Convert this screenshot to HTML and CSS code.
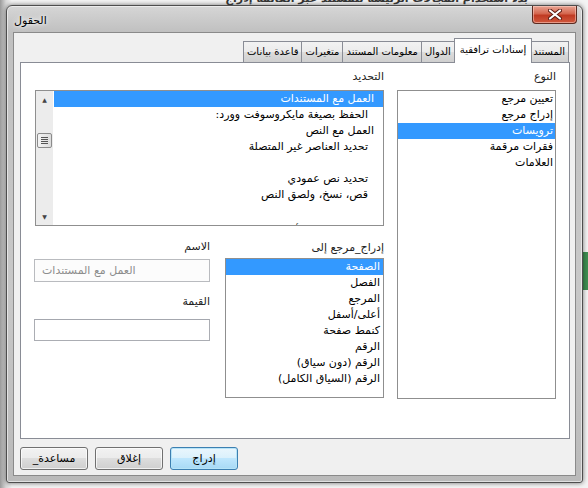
FILE: index.html
```html
<!DOCTYPE html>
<html lang="ar">
<head>
<meta charset="UTF-8">
<title>الحقول</title>
<link rel="stylesheet" href="styles.css">
</head>
<body>
<div class="desktop">
  <div class="behind-text"><span>بدء استخدام المجالات الرئيسة للمستند عبر القائمة إدراج</span></div>
  <div class="window">
    <div class="titlebar">
      <span class="title">الحقول</span>
      <div class="close-btn">
        <svg width="14" height="11" viewBox="0 0 14 11">
          <path d="M2 1.5 L12 9.5 M12 1.5 L2 9.5" stroke="#5a1a10" stroke-width="4" stroke-linecap="round"/>
          <path d="M2 1.5 L12 9.5 M12 1.5 L2 9.5" stroke="#fff" stroke-width="2.2" stroke-linecap="round"/>
        </svg>
      </div>
    </div>
    <div class="client" dir="rtl">
      <div class="tabs">
        <div class="tab">المستند</div>
        <div class="tab active">إسنادات ترافقية</div>
        <div class="tab">الدوال</div>
        <div class="tab">معلومات المستند</div>
        <div class="tab">متغيرات</div>
        <div class="tab">قاعدة بيانات</div>
      </div>
      <div class="panel">
        <div class="col-type">
          <div class="label">النوع</div>
          <ul class="list list-type">
            <li>تعيين مرجع</li>
            <li>إدراج مرجع</li>
            <li class="selected">ترويسات</li>
            <li>فقرات مرقمة</li>
            <li>العلامات</li>
          </ul>
        </div>
        <div class="col-main">
          <div class="label">التحديد</div>
          <div class="list list-select">
            <ul>
              <li class="selected">العمل مع المستندات</li>
              <li class="sub">الحفظ بصيغة مايكروسوفت وورد:</li>
              <li>العمل مع النص</li>
              <li class="sub">تحديد العناصر غير المتصلة</li>
              <li></li>
              <li class="sub">تحديد نص عمودي</li>
              <li class="sub">قص، نسخ، ولصق النص</li>
              <li></li>
              <li class="sub peek">تنسيق النص بالأنماط</li>
            </ul>
            <div class="scrollbar">
              <span class="arrow">&#9650;</span>
              <div class="track">
                <div class="thumb"><i></i><i></i><i></i><i></i></div>
              </div>
              <span class="arrow">&#9660;</span>
            </div>
          </div>
          <div class="lower">
            <div class="group-insert">
              <div class="label">إدراج_مرجع إلى</div>
              <ul class="list list-insert">
                <li class="selected">الصفحة</li>
                <li>الفصل</li>
                <li>المرجع</li>
                <li>أعلى/أسفل</li>
                <li>كنمط صفحة</li>
                <li>الرقم</li>
                <li>الرقم (دون سياق)</li>
                <li>الرقم (السياق الكامل)</li>
              </ul>
            </div>
            <div class="group-fields">
              <div class="label">الاسم</div>
              <div class="field disabled" dir="ltr">العمل مع المستندات</div>
              <div class="label label-value">القيمة</div>
              <div class="field field-value"></div>
            </div>
          </div>
        </div>
      </div>
      <div class="buttons">
        <div class="btn default">إدراج</div>
        <div class="btn">إغلاق</div>
        <div class="btn">مساعدة_</div>
      </div>
    </div>
  </div>
</div>
</body>
</html>
```

FILE: styles.css
```css
/* Page and the desktop behind the dialog */
body {
  margin: 0;
  font-family: "DejaVu Sans", "Noto Sans", sans-serif;
  font-size: 11px;
  color: #000;
}
.desktop {
  width: 588px;
  height: 488px;
  overflow: hidden;
  background:
    linear-gradient(to bottom, transparent 252px, #3f8f52 252px, #3f8f52 290px, transparent 290px) right top / 5px 100% no-repeat,
    linear-gradient(to right, #9a9a9a, #d8d8d8 6px, #f4f4f4 12px);
}
.behind-text {
  height: 5px;
  overflow: hidden;
  direction: rtl;
  padding-right: 60px;
  font-weight: bold;
  font-size: 11px;
  line-height: 10px;
}
.behind-text span {
  display: block;
  margin-top: -6px;
  color: #333;
}

/* Dialog window frame */
.window {
  width: 577px;
  height: 478px;
  margin-left: 6px;
  box-sizing: border-box;
  border: 1px solid #4e4e4e;
  border-radius: 6px 6px 3px 3px;
  background: linear-gradient(to bottom, #d6d6d6, #c0c0c0 26px, #c8c8c8 60%, #bababa);
  box-shadow: 0 0 5px rgba(0, 0, 0, 0.55), inset 0 0 0 1px rgba(255, 255, 255, 0.55);
}
.titlebar {
  height: 26px;
  display: flex;
  justify-content: space-between;
  align-items: flex-start;
  direction: ltr;
}
.title {
  margin: 8px 0 0 7px;
  font-size: 11px;
  text-shadow: 0 0 6px #fff, 0 0 3px #fff;
}
.close-btn {
  width: 45px;
  height: 18px;
  margin-right: 5px;
  box-sizing: border-box;
  border: 1px solid #5b2a20;
  border-top: none;
  border-radius: 0 0 4px 4px;
  background: linear-gradient(to bottom, #e8a493, #d4664e 45%, #c03a22 55%, #d0593e);
  display: flex;
  align-items: center;
  justify-content: center;
  box-shadow: inset 0 0 0 1px rgba(255, 220, 210, 0.5);
}

/* Client area */
.client {
  height: 444px;
  margin: 0 6px;
  box-sizing: border-box;
  border: 1px solid #8a8a8a;
  background: #f0f0f0;
}
.tabs {
  display: flex;
  align-items: flex-end;
  height: 24px;
  margin: 5px 6px 0 0;
  position: relative;
  z-index: 1;
}
.tab {
  height: 21px;
  box-sizing: border-box;
  padding: 0 3px;
  margin-left: -1px;
  border: 1px solid #898c95;
  border-bottom: none;
  background: linear-gradient(to bottom, #f2f2f2, #ebebeb 50%, #dddddd 50%, #cfcfcf);
  font-size: 10px;
  line-height: 19px;
  white-space: nowrap;
}
.tab.active {
  height: 25px;
  margin: 0 -2px -1px -1px;
  padding: 0 5px;
  background: #fff;
  line-height: 22px;
  position: relative;
}
.panel {
  height: 377px;
  margin: 0 5px 0 6px;
  box-sizing: border-box;
  border: 1px solid #898c95;
  background: #fff;
  display: grid;
  grid-template-columns: 159px 349px;
  column-gap: 13px;
  padding: 7px 13px 0 0;
  align-content: start;
}
.label {
  height: 14px;
  line-height: 14px;
  color: #222;
}

/* List boxes */
.list {
  margin: 0;
  padding: 0;
  list-style: none;
  box-sizing: border-box;
  border: 1px solid #8f8f8f;
  background: #fff;
}
.list li {
  height: 16px;
  line-height: 16px;
  white-space: nowrap;
}
.list li.selected {
  background: #3399ff;
  color: #fff;
}
.list-type {
  height: 309px;
  margin-top: 6px;
}
.list-type li {
  padding-right: 2px;
}
.list-select {
  height: 136px;
  margin-top: 6px;
  display: flex;
  overflow: hidden;
}
.list-select ul {
  flex: 1;
  margin: 0 0 0 1px;
  padding: 0;
  list-style: none;
}
.list-select li {
  padding-right: 9px;
}
.list-select li.sub {
  padding-right: 15px;
}
.list-select li.peek {
  padding-top: 4px;
}
.scrollbar {
  width: 17px;
  display: flex;
  flex-direction: column;
  align-items: center;
  background: #ececec;
}
.arrow {
  font-size: 6px;
  height: 17px;
  line-height: 17px;
  color: #444;
}
.track {
  flex: 1;
  width: 100%;
}
.thumb {
  width: 15px;
  height: 15px;
  margin: 25px auto 0;
  box-sizing: border-box;
  border: 1px solid #8b8b8b;
  border-radius: 2px;
  background: linear-gradient(to right, #f4f4f4, #dcdcdc);
  display: flex;
  flex-direction: column;
  align-items: center;
  justify-content: center;
  gap: 1px;
}
.thumb i {
  display: block;
  width: 7px;
  height: 1px;
  background: #555;
}

/* Lower part: insert list and fields */
.lower {
  display: flex;
  justify-content: space-between;
  margin-top: 14px;
}
.group-insert {
  width: 159px;
  padding-top: 1px;
}
.list-insert {
  height: 140px;
  margin-top: 3px;
}
.list-insert li {
  padding-right: 3px;
}
.group-fields {
  width: 176px;
  margin-left: -1px;
}
.field {
  height: 23px;
  margin-top: 5px;
  box-sizing: border-box;
  border: 1px solid #abadb3;
  border-top-color: #a4a7ae;
  background: #fff;
  line-height: 21px;
  padding-left: 7px;
}
.field.disabled {
  color: #8d8d8d;
  border-color: #b9bbbf;
  background: #fcfcfc;
  text-align: left;
}
.label-value {
  margin-top: 13px;
}
.field-value {
  height: 22px;
  margin-top: 10px;
}

/* Dialog buttons */
.buttons {
  display: flex;
  justify-content: flex-end;
  gap: 7px;
  margin: 8px 0 0 6px;
}
.btn {
  width: 68px;
  height: 23px;
  box-sizing: border-box;
  border: 1px solid #707070;
  border-radius: 3px;
  background: linear-gradient(to bottom, #f2f2f2, #ebebeb 50%, #dddddd 50%, #cfcfcf);
  box-shadow: inset 0 0 0 1px rgba(255, 255, 255, 0.7);
  text-align: center;
  line-height: 21px;
}
.btn.default {
  border-color: #3c7fb1;
  box-shadow: inset 0 0 0 1px #b6e4f8;
  background: linear-gradient(to bottom, #eaf6fd, #d9f0fc 50%, #bee6fd 50%, #a7d9f5);
}
```
